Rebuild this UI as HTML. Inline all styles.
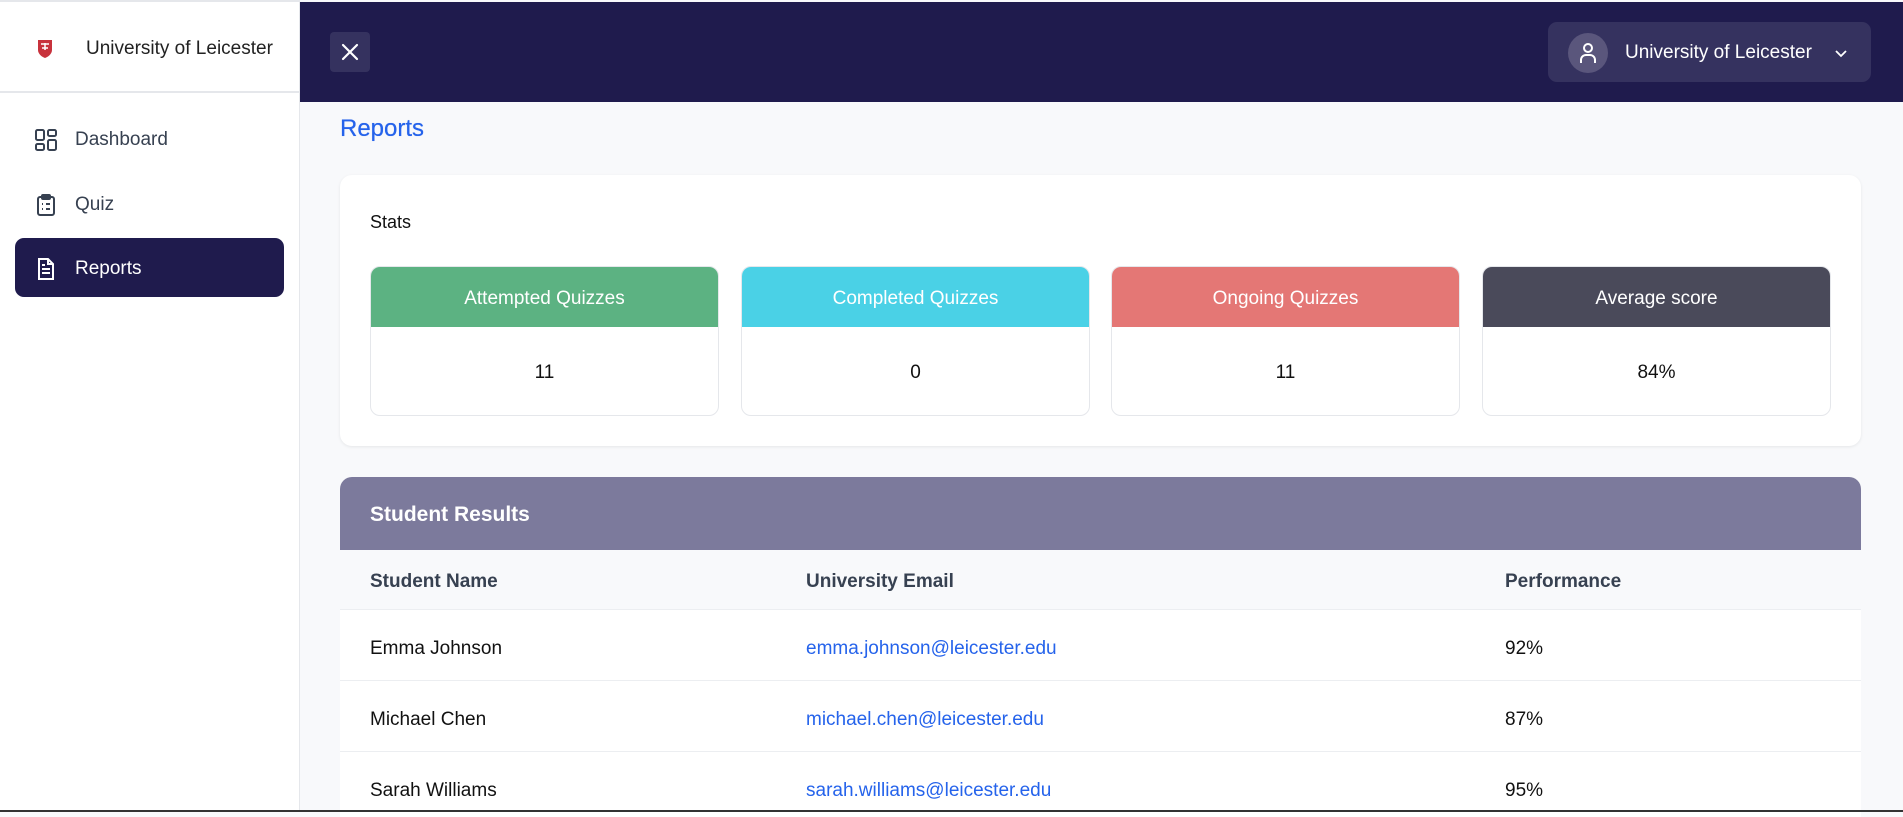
<!DOCTYPE html>
<html><head><meta charset="utf-8"><style>
*{box-sizing:border-box;margin:0;padding:0}
body{width:1903px;height:812px;overflow:hidden;background:#f8f9fb;font-family:"Liberation Sans",sans-serif;color:#1f2937;position:relative}
.sb{position:absolute;left:0;top:0;width:300px;height:812px;background:#fff;border-right:1px solid #e5e7eb;border-top:2px solid #e5e7eb}
.logo{height:91px;border-bottom:2px solid #e5e7eb;display:flex;align-items:center;padding-left:37px;font-size:19px;color:#222;padding-top:4px}
.logo span{margin-left:33px}
.nav{position:absolute;left:15px;width:269px;height:59px;border-radius:9px;display:flex;align-items:center;padding-left:20px;font-size:19px;color:#374151;padding-top:2px}
.nav svg{margin-right:18px}
.nav.act{background:#1f1b4d;color:#fff}
.hd{position:absolute;left:300px;top:2px;right:0;height:100px;background:#1f1b4d}
.x{position:absolute;left:30px;top:30px;width:40px;height:40px;background:#35325f;border-radius:4px}
.user{position:absolute;left:1248px;top:20px;width:323px;height:60px;background:#35325f;border-radius:9px;color:#fff;font-size:19px;display:flex;align-items:center;padding-top:2px}
.av{width:40px;height:40px;border-radius:50%;background:#5a567c;margin:0 17px 0 20px;display:flex;align-items:center;justify-content:center}
h1{position:absolute;left:340px;top:115px;font-size:24px;color:#2563eb;font-weight:normal;text-shadow:0 0 0.5px #2563eb}
.card{position:absolute;left:340px;top:175px;width:1521px;height:271px;background:#fff;border-radius:12px;box-shadow:0 1px 3px rgba(0,0,0,.08)}
.card .t{position:absolute;left:30px;top:37px;font-size:18px;color:#111}
.box{position:absolute;top:91px;width:349px;height:150px;border:1px solid #e5e7eb;border-radius:10px;overflow:hidden}
.box .h{height:60px;color:#fff;font-size:19px;display:flex;align-items:center;justify-content:center;padding-top:3px}
.box .v{height:89px;display:flex;align-items:center;justify-content:center;font-size:19px;color:#111;padding-top:3px}
.tbl{position:absolute;left:340px;top:477px;width:1521px;height:340px;background:#fff;border-radius:12px 12px 0 0;overflow:hidden}
.th{height:73px;background:#7c7a9c;color:#fff;font-size:21px;font-weight:bold;padding-left:30px;display:flex;align-items:center;padding-top:2px}
.row{height:71px;border-bottom:1px solid #eceef1;position:relative;font-size:19px;color:#111}
.row div{position:absolute;top:4px;height:100%;display:flex;align-items:center}
.c1{left:30px}.c2{left:466px}.c3{left:1165px}
.hr{height:60px;background:#f8f9fb;font-weight:bold;color:#374151}
.c2 a{color:#2563eb;text-decoration:none}
.bot{position:absolute;left:0;bottom:0;width:1903px;height:2px;background:#333}
</style></head><body>
<div class="sb">
<div class="logo"><svg width="16" height="20" viewBox="0 0 16 20"><path d="M1 1h14v10c0 4-4 7-7 8-3-1-7-4-7-8z" fill="#c8323c"/><path d="M4 5h8M8 4v7M5 9h6" stroke="#fff" stroke-width="1.5"/></svg><span>University of Leicester</span></div>
<div class="nav" style="top:107px;"><svg width="22" height="22" viewBox="0 0 22 22" fill="none" stroke="#374151" stroke-width="2"><rect x="1" y="1" width="8" height="10" rx="1.5"/><rect x="13" y="1" width="8" height="6" rx="1.5"/><rect x="1" y="15" width="8" height="6" rx="1.5"/><rect x="13" y="11" width="8" height="10" rx="1.5"/></svg>Dashboard</div>
<div class="nav" style="top:172px;"><svg width="22" height="22" viewBox="0 0 22 22" fill="none" stroke="#374151" stroke-width="2"><rect x="3" y="3" width="16" height="18" rx="2"/><rect x="7" y="1" width="8" height="4" rx="1"/><path d="M7 10h1M11 10h4M7 15h1M11 15h4"/></svg>Quiz</div>
<div class="nav act" style="top:236px;"><svg width="22" height="22" viewBox="0 0 22 22" fill="none" stroke="#fff" stroke-width="2"><path d="M4 1h9l5 5v15H4z"/><path d="M13 1v5h5M7 11h8M7 15h8M7 7h3"/></svg>Reports</div>
</div>
<div class="hd">
<div class="x"><svg width="40" height="40" viewBox="0 0 40 40"><path d="M13 13l14 14M27 13L13 27" stroke="#fff" stroke-width="2.2" stroke-linecap="round"/></svg></div>
<div class="user"><div class="av"><svg width="20" height="22" viewBox="0 0 20 22" fill="none" stroke="#fff" stroke-width="2"><circle cx="10" cy="6" r="4"/><path d="M3 21v-3a5 5 0 0 1 5-5h4a5 5 0 0 1 5 5v3"/></svg></div>University of Leicester<svg style="margin-left:22px" width="14" height="10" viewBox="0 0 14 10"><path d="M2 3l5 5 5-5" stroke="#fff" stroke-width="1.8" fill="none"/></svg></div>
</div>
<h1>Reports</h1>
<div class="card"><div class="t">Stats</div>
<div class="box" style="left:30px"><div class="h" style="background:#5cb282">Attempted Quizzes</div><div class="v">11</div></div>
<div class="box" style="left:401px"><div class="h" style="background:#4ad1e6">Completed Quizzes</div><div class="v">0</div></div>
<div class="box" style="left:771px"><div class="h" style="background:#e47775">Ongoing Quizzes</div><div class="v">11</div></div>
<div class="box" style="left:1142px"><div class="h" style="background:#4a4a5a">Average score</div><div class="v">84%</div></div>
</div>
<div class="tbl"><div class="th">Student Results</div>
<div class="row hr"><div class="c1" style="top:2px">Student Name</div><div class="c2" style="top:2px">University Email</div><div class="c3" style="top:2px">Performance</div></div>
<div class="row"><div class="c1">Emma Johnson</div><div class="c2"><a>emma.johnson@leicester.edu</a></div><div class="c3">92%</div></div>
<div class="row"><div class="c1">Michael Chen</div><div class="c2"><a>michael.chen@leicester.edu</a></div><div class="c3">87%</div></div>
<div class="row"><div class="c1">Sarah Williams</div><div class="c2"><a>sarah.williams@leicester.edu</a></div><div class="c3">95%</div></div>
</div>
<div class="bot"></div>
</body></html>
